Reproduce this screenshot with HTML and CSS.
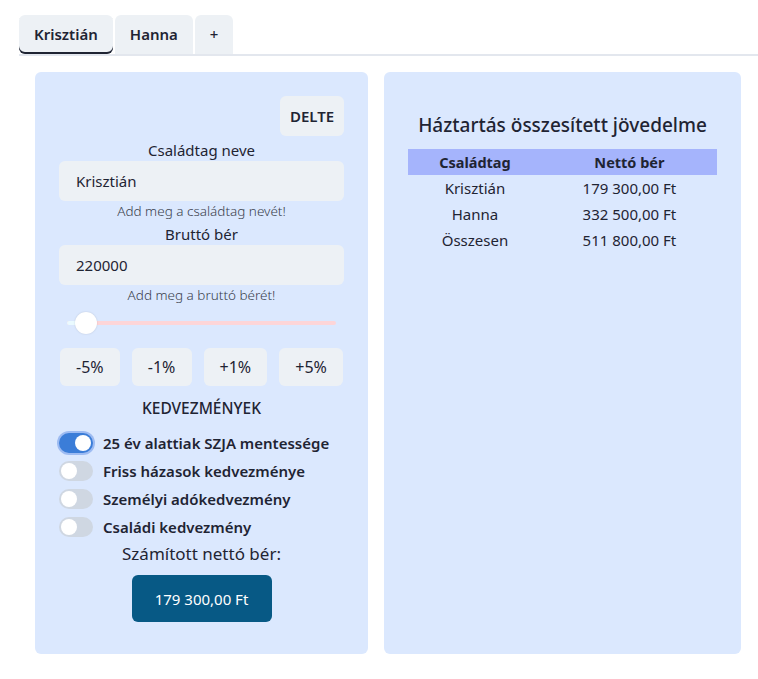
FILE: index.html
```html
<!DOCTYPE html>
<html lang="hu">
<head>
<meta charset="utf-8">
<link rel="stylesheet" href="styles.css">
</head>
<body>
<div class="app">
  <nav class="tabs">
    <button class="tab active">Krisztián</button>
    <button class="tab">Hanna</button>
    <button class="tab plus">+</button>
  </nav>
  <div class="grid">
    <section class="panel left">
      <div class="row-end"><button class="btn delte">DELTE</button></div>
      <label class="lbl">Családtag neve</label>
      <div class="input">Krisztián</div>
      <div class="help">Add meg a családtag nevét!</div>
      <label class="lbl">Bruttó bér</label>
      <div class="input">220000</div>
      <div class="help">Add meg a bruttó bérét!</div>
      <div class="slider">
        <div class="fill"></div>
        <div class="thumb"></div>
      </div>
      <div class="pct">
        <button class="btn p">-5%</button>
        <button class="btn p">-1%</button>
        <button class="btn p">+1%</button>
        <button class="btn p">+5%</button>
      </div>
      <div class="kedv">KEDVEZMÉNYEK</div>
      <ul class="toggles">
        <li><span class="tg on"><span class="knob"></span></span>25 év alattiak SZJA mentessége</li>
        <li><span class="tg"><span class="knob"></span></span>Friss házasok kedvezménye</li>
        <li><span class="tg"><span class="knob"></span></span>Személyi adókedvezmény</li>
        <li><span class="tg"><span class="knob"></span></span>Családi kedvezmény</li>
      </ul>
      <div class="netto-lbl">Számított nettó bér:</div>
      <div class="center"><button class="btn result">179 300,00 Ft</button></div>
    </section>
    <section class="panel right">
      <h2 class="title">Háztartás összesített jövedelme</h2>
      <table class="tbl">
        <thead><tr><th>Családtag</th><th>Nettó bér</th></tr></thead>
        <tbody>
          <tr><td>Krisztián</td><td>179 300,00 Ft</td></tr>
          <tr><td>Hanna</td><td>332 500,00 Ft</td></tr>
          <tr><td>Összesen</td><td>511 800,00 Ft</td></tr>
        </tbody>
      </table>
    </section>
  </div>
</div>
</body>
</html>
```
FILE: styles.css
```css
* { box-sizing: border-box; }
html, body { margin: 0; padding: 0; background: #fff; }
body {
  font-family: "Noto Sans", "Open Sans", sans-serif;
  color: #1f2433;
  font-size: 15px;
}
.app { padding: 15px 0 0 19px; }
.tabs {
  display: flex;
  gap: 2px;
  border-bottom: 2px solid #e3e7ee;
  height: 41px;
}
.tab {
  font-family: inherit;
  font-size: 15px;
  font-weight: 600;
  color: #1f2433;
  background: #edf1f5;
  border: none;
  border-radius: 6px 6px 0 0;
  height: 39px;
  padding: 0 15px 2px;
  cursor: pointer;
}
.tab.active { box-shadow: inset 0 -2px 0 #1f2433; border-radius: 6px; }
.tab.plus { padding: 0 15px 2px; font-weight: 500; }
.grid {
  display: grid;
  grid-template-columns: 333px 357px;
  gap: 16px;
  padding: 16px 0 0 16px;
}
.panel {
  background: #dbe8fe;
  border-radius: 6px;
  height: 582px;
  padding: 24px;
}
.btn {
  font-family: inherit;
  background: #edf1f5;
  border: none;
  border-radius: 6px;
  color: #1f2433;
  cursor: pointer;
}
.row-end { display: flex; justify-content: flex-end; }
.delte { height: 40px; width: 64px; font-size: 15px; font-weight: 600; }
.lbl { display: block; text-align: center; font-size: 15px; line-height: 20px; margin-top: 4px; }
.input {
  background: #edf1f5;
  border-radius: 6px;
  height: 40px;
  line-height: 40px;
  padding: 0 17px;
  font-size: 15px;
  margin-top: 1px;
}
.help { text-align: center; font-size: 13.5px; font-weight: 300; line-height: 17px; margin-top: 2px; color: #3a3f4d; }
.slider {
  position: relative;
  height: 4px;
  margin: 17px 8px 0 8px;
  background: #fdd5d8;
  border-radius: 2px;
}
.slider .fill { width: 19px; height: 4px; background: #eafaff; border-radius: 2px; }
.slider .thumb {
  position: absolute;
  left: 8px; top: -9px;
  width: 22px; height: 22px;
  border-radius: 50%;
  background: #fff;
  box-shadow: 0 0 2px rgba(0,0,0,0.15);
}
.pct { display: flex; gap: 12px; margin-top: 23px; padding: 0 1px; }
.btn.p { flex: 1 1 auto; height: 38px; font-size: 16px; }
.kedv { text-align: center; font-size: 15.5px; font-weight: 500; margin-top: 11px; line-height: 22px; }
.toggles { list-style: none; margin: 10px 0 0 0; padding: 0; }
.toggles li {
  display: flex; align-items: center; gap: 10px;
  height: 28px;
  font-size: 15px; font-weight: 600;
}
.tg {
  width: 34px; height: 20px;
  border-radius: 10px;
  background: #cfd7e2;
  position: relative;
  flex: none;
}
.tg .knob {
  position: absolute; left: 2px; top: 2px;
  width: 16px; height: 16px; border-radius: 50%; background: #fff;
}
.tg.on { background: #3b7dd8; box-shadow: 0 0 0 2px #9dbbf2; }
.tg.on .knob { left: 16px; }
.netto-lbl { text-align: center; font-size: 17px; margin-top: 1px; line-height: 24px; }
.center { display: flex; justify-content: center; margin-top: 9px; }
.result { background: #075985; color: #fff; width: 140px; height: 47px; font-size: 15px; }
.title { text-align: center; font-size: 19px; font-weight: 500; margin: 16px 0 11px; line-height: 26px; }
.tbl { width: 100%; border-collapse: collapse; font-size: 15px; }
.tbl th { background: #a5b4fc; font-weight: 700; height: 26px; padding: 0; font-size: 14.5px; }
.tbl td { text-align: center; height: 26px; padding: 0; }
```
